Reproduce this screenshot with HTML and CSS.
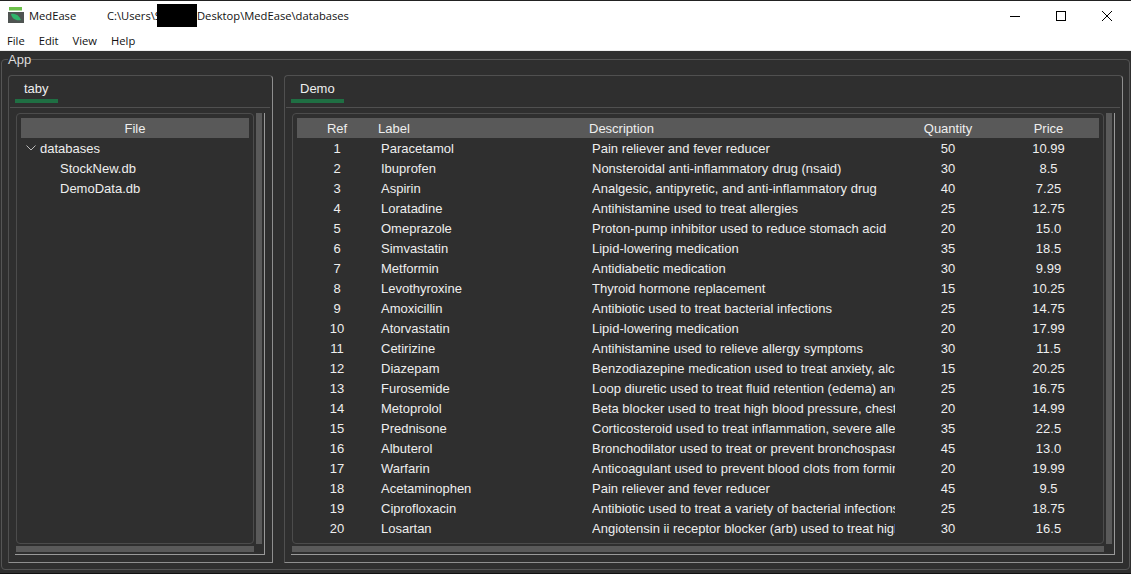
FILE: index.html
```html
<!DOCTYPE html>
<html lang="en">
<head>
    <meta charset="UTF-8">
    <title>MedEase</title>
    <link rel="stylesheet" href="styles.css">
</head>
<body>
    <header class="titlebar">
        <svg class="logo" width="16" height="16" viewBox="0 0 16 16">
            <rect x="1" y="0" width="13" height="3.5" fill="#6cc04a"/>
            <rect x="0" y="5" width="16" height="11" fill="#4f5452"/>
            <path d="M3 7 C7 6 11 8 13 13 C8 14 4 12 3 7 Z" fill="#2fb56a"/>
        </svg>
        <span class="appname">MedEase</span>
        <span class="path-start">C:\Users\S</span>
        <span class="redacted"></span>
        <span class="path-end">Desktop\MedEase\databases</span>
        <div class="winbtns">
            <svg width="12" height="12" viewBox="0 0 12 12"><path d="M1 6.5H11" stroke="#000"/></svg>
            <svg width="12" height="12" viewBox="0 0 12 12"><rect x="1.5" y="1.5" width="9" height="9" fill="none" stroke="#000"/></svg>
            <svg width="12" height="12" viewBox="0 0 12 12"><path d="M1 1L11 11M11 1L1 11" stroke="#000"/></svg>
        </div>
    </header>
    <nav class="menubar">
        <span>File</span>
        <span>Edit</span>
        <span>View</span>
        <span>Help</span>
    </nav>

    <main class="workspace">
        <fieldset class="app">
            <legend>App</legend>

            <!-- panel izquierdo -->
            <section class="panel panel-left">
                <div class="tabs"><span class="tab">taby</span></div>
                <div class="frame">
                    <div class="box">
                        <div class="tree-head">File</div>
                        <div class="tree-row">
                            <svg class="chevron" width="10" height="6" viewBox="0 0 10 6"><path d="M0.5 0.5L5 5L9.5 0.5" fill="none" stroke="#bbb"/></svg>
                            databases
                        </div>
                        <div class="tree-row tree-child">StockNew.db</div>
                        <div class="tree-row tree-child">DemoData.db</div>
                    </div>
                    <div class="vscroll"></div>
                    <div class="hscroll"></div>
                </div>
            </section>

            <!-- panel derecho -->
            <section class="panel panel-right">
                <div class="tabs"><span class="tab">Demo</span></div>
                <div class="frame">
                    <div class="box">
                        <table class="grid">
                            <colgroup>
                                <col class="c-ref"><col class="c-label"><col class="c-desc"><col class="c-qty"><col class="c-price">
                            </colgroup>
                            <thead>
                                <tr><th>Ref</th><th class="left">Label</th><th class="left">Description</th><th>Quantity</th><th>Price</th></tr>
                            </thead>
                            <tbody>
                                <tr><td>1</td><td class="left">Paracetamol</td><td class="left"><span class="clip">Pain reliever and fever reducer</span></td><td>50</td><td>10.99</td></tr>
                                <tr><td>2</td><td class="left">Ibuprofen</td><td class="left"><span class="clip">Nonsteroidal anti-inflammatory drug (nsaid)</span></td><td>30</td><td>8.5</td></tr>
                                <tr><td>3</td><td class="left">Aspirin</td><td class="left"><span class="clip">Analgesic, antipyretic, and anti-inflammatory drug</span></td><td>40</td><td>7.25</td></tr>
                                <tr><td>4</td><td class="left">Loratadine</td><td class="left"><span class="clip">Antihistamine used to treat allergies</span></td><td>25</td><td>12.75</td></tr>
                                <tr><td>5</td><td class="left">Omeprazole</td><td class="left"><span class="clip">Proton-pump inhibitor used to reduce stomach acid</span></td><td>20</td><td>15.0</td></tr>
                                <tr><td>6</td><td class="left">Simvastatin</td><td class="left"><span class="clip">Lipid-lowering medication</span></td><td>35</td><td>18.5</td></tr>
                                <tr><td>7</td><td class="left">Metformin</td><td class="left"><span class="clip">Antidiabetic medication</span></td><td>30</td><td>9.99</td></tr>
                                <tr><td>8</td><td class="left">Levothyroxine</td><td class="left"><span class="clip">Thyroid hormone replacement</span></td><td>15</td><td>10.25</td></tr>
                                <tr><td>9</td><td class="left">Amoxicillin</td><td class="left"><span class="clip">Antibiotic used to treat bacterial infections</span></td><td>25</td><td>14.75</td></tr>
                                <tr><td>10</td><td class="left">Atorvastatin</td><td class="left"><span class="clip">Lipid-lowering medication</span></td><td>20</td><td>17.99</td></tr>
                                <tr><td>11</td><td class="left">Cetirizine</td><td class="left"><span class="clip">Antihistamine used to relieve allergy symptoms</span></td><td>30</td><td>11.5</td></tr>
                                <tr><td>12</td><td class="left">Diazepam</td><td class="left"><span class="clip">Benzodiazepine medication used to treat anxiety, alcohol withdrawal</span></td><td>15</td><td>20.25</td></tr>
                                <tr><td>13</td><td class="left">Furosemide</td><td class="left"><span class="clip">Loop diuretic used to treat fluid retention (edema) and swelling</span></td><td>25</td><td>16.75</td></tr>
                                <tr><td>14</td><td class="left">Metoprolol</td><td class="left"><span class="clip">Beta blocker used to treat high blood pressure, chest pain</span></td><td>20</td><td>14.99</td></tr>
                                <tr><td>15</td><td class="left">Prednisone</td><td class="left"><span class="clip">Corticosteroid used to treat inflammation, severe allergies</span></td><td>35</td><td>22.5</td></tr>
                                <tr><td>16</td><td class="left">Albuterol</td><td class="left"><span class="clip">Bronchodilator used to treat or prevent bronchospasm</span></td><td>45</td><td>13.0</td></tr>
                                <tr><td>17</td><td class="left">Warfarin</td><td class="left"><span class="clip">Anticoagulant used to prevent blood clots from forming</span></td><td>20</td><td>19.99</td></tr>
                                <tr><td>18</td><td class="left">Acetaminophen</td><td class="left"><span class="clip">Pain reliever and fever reducer</span></td><td>45</td><td>9.5</td></tr>
                                <tr><td>19</td><td class="left">Ciprofloxacin</td><td class="left"><span class="clip">Antibiotic used to treat a variety of bacterial infections</span></td><td>25</td><td>18.75</td></tr>
                                <tr><td>20</td><td class="left">Losartan</td><td class="left"><span class="clip">Angiotensin ii receptor blocker (arb) used to treat high blood pressure</span></td><td>30</td><td>16.5</td></tr>
                            </tbody>
                        </table>
                    </div>
                    <div class="vscroll"></div>
                    <div class="hscroll"></div>
                </div>
            </section>
        </fieldset>
    </main>
</body>
</html>
```

FILE: styles.css
```css
* {
    box-sizing: border-box;
}
html, body {
    height: 100%;
}
body {
    margin: 0;
    display: flex;
    flex-direction: column;
    background: #121212;
    font-family: "Liberation Sans", Arial, sans-serif;
    font-size: 13px;
    color: #eee;
    overflow: hidden;
}

/* barra de titulo */
.titlebar {
    height: 30px;
    flex: none;
    display: flex;
    align-items: center;
    background: #fff;
    border-top: 1px solid #222;
    color: #111;
    font-family: "Open Sans", "Noto Sans", sans-serif;
    font-size: 11.2px;
    padding-left: 8px;
}
.logo {
    flex: none;
    margin-bottom: 1px;
}
.appname {
    margin-left: 5px;
    width: 78px;
}
.path-start {
    width: 50px;
    overflow: hidden;
    white-space: nowrap;
}
.redacted {
    width: 40px;
    height: 23px;
    background: #000;
}
.winbtns {
    margin-left: auto;
    display: flex;
}
.winbtns svg {
    width: 12px;
    height: 12px;
    margin: 0 17px;
}
.winbtns svg:last-child {
    margin-right: 18px;
}

.menubar {
    height: 21px;
    flex: none;
    display: flex;
    gap: 14px;
    align-items: center;
    padding: 1px 0 0 7px;
    background: #fff;
    border-bottom: 1px solid #eee;
    color: #111;
    font-family: "Open Sans", "Noto Sans", sans-serif;
    font-size: 11.2px;
}

/* contenido */
.workspace {
    flex: 1;
    min-height: 0;
    background: #2f2f2f;
    padding: 2px 1px 3px 1px;
    margin-bottom: 1px;
}
.app {
    height: 100%;
    margin: 0;
    min-width: 0;
    display: flex;
    gap: 11px;
    padding: 9px 6px 6px 6px;
    border: 1px solid #555;
    border-radius: 4px;
}
.app legend {
    padding: 0;
    margin-left: 0;
    font-size: 13px;
    line-height: 13px;
    color: #ddd;
}
.panel {
    display: flex;
    flex-direction: column;
    padding: 0 7px 7px 6px;
    border: 1px solid #505050;
    border-right-color: #8f8f8f;
    border-bottom-color: #8f8f8f;
    border-top-left-radius: 4px;
    border-top-right-radius: 4px;
}
.panel-left {
    width: 265px;
    flex: none;
}
.panel-right {
    flex: 1;
    min-width: 0;
}

.tabs {
    height: 32px;
    flex: none;
    margin: 0 -5px;
    padding: 0 5px;
    border-bottom: 1px solid #505050;
    display: flex;
}
.tab {
    height: 27px;
    padding: 5px 9px 0;
    border-bottom: 4px solid #1f6f43;
    line-height: 16px;
}

.frame {
    flex: 1;
    min-height: 0;
    margin-top: 5px;
    padding: 0 2px 2px 1px;
    display: grid;
    grid-template-columns: 1fr 6px;
    grid-template-rows: 1fr 6px;
    gap: 2px;
    border-right: 1px solid #9a9a9a;
    border-bottom: 1px solid #9a9a9a;
}
.box {
    min-width: 0;
    padding: 4px;
    border: 1px solid #4c4c4c;
    border-radius: 4px;
    overflow: hidden;
}
.vscroll {
    background: #5a5a5a;
}
.hscroll {
    background: #5a5a5a;
}

/* arbol de archivos */
.tree-head {
    height: 20px;
    line-height: 22px;
    text-align: center;
    background: #595959;
}
.tree-row {
    height: 20px;
    line-height: 22px;
    padding-left: 19px;
    position: relative;
}
.tree-child {
    padding-left: 39px;
}
.chevron {
    position: absolute;
    left: 5px;
    top: 7px;
}

/* tabla */
.grid {
    width: 802px;
    table-layout: fixed;
    border-collapse: collapse;
}
.c-ref { width: 80px; }
.c-label { width: 211px; }
.c-desc { width: 310px; }
.c-qty { width: 100px; }
.c-price { width: 101px; }
.grid th {
    height: 20px;
    padding: 0;
    font-weight: normal;
    background: #595959;
    text-align: center;
}
.grid th.left {
    text-align: left;
    padding-left: 1px;
}
.grid td {
    height: 20px;
    padding: 0;
    text-align: center;
    white-space: nowrap;
}
.grid td.left {
    text-align: left;
    padding-left: 4px;
    padding-right: 3px;
}
.clip {
    display: block;
    overflow: hidden;
}
```
